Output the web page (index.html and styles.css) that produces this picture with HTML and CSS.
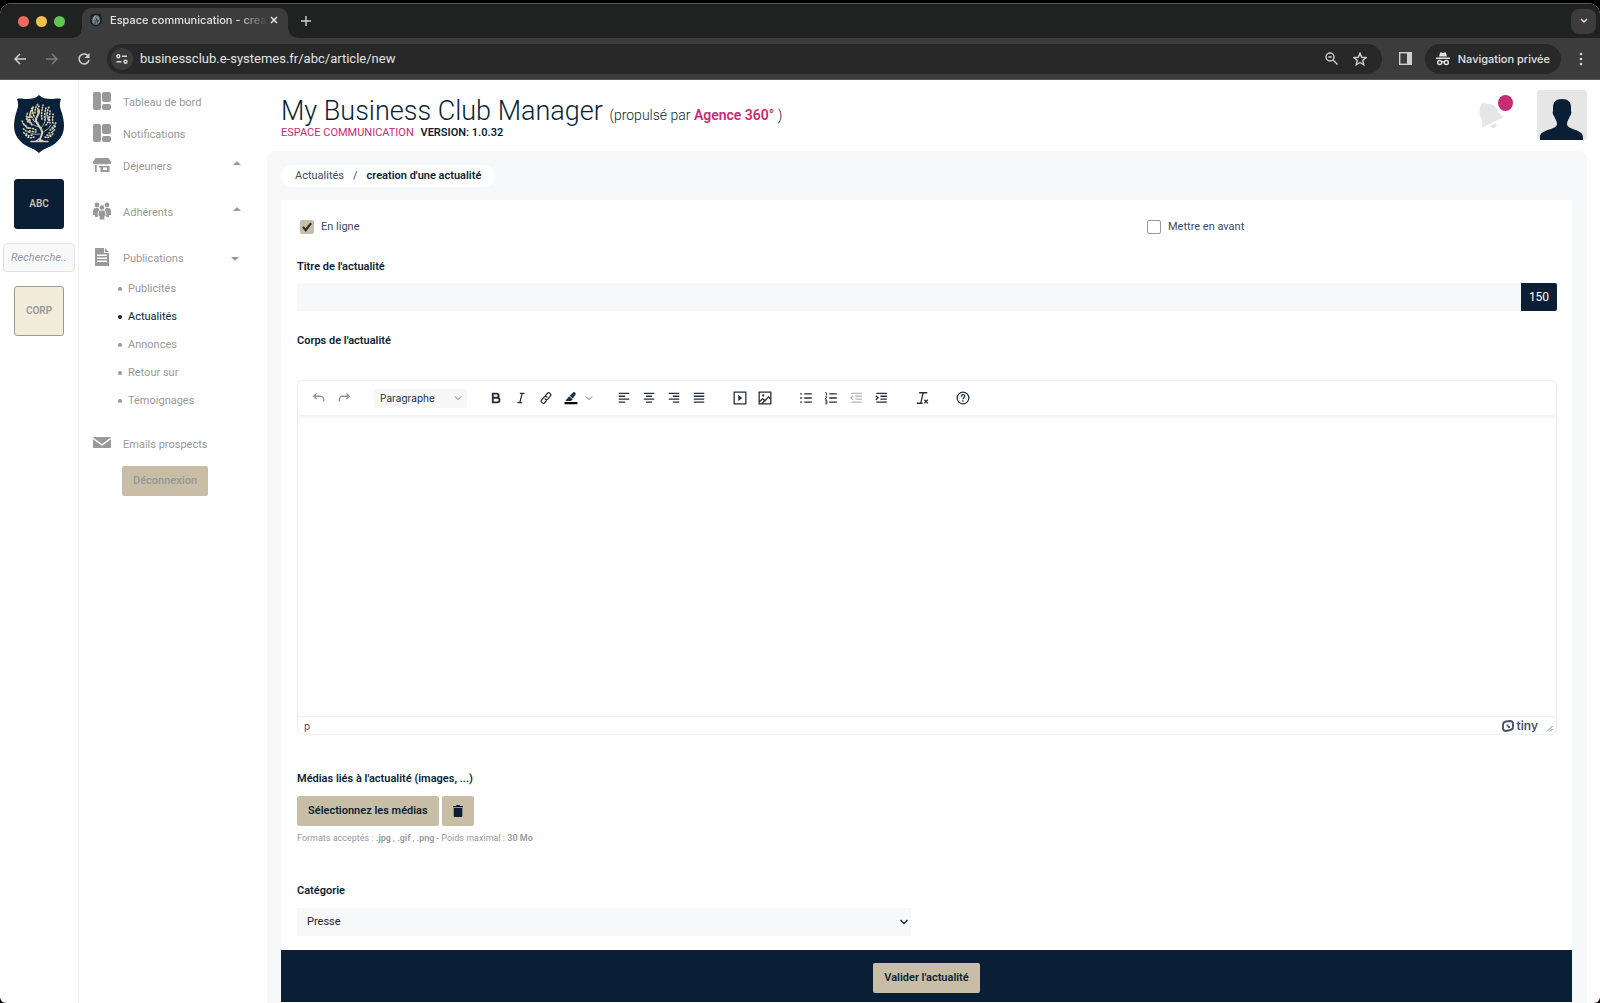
FILE: index.html
```html
<!DOCTYPE html>
<html lang="fr">
<head>
<meta charset="utf-8">
<title>Espace communication - creation d'une actualité</title>
<link rel="stylesheet" href="styles.css">
</head>
<body>
<svg class="defs" aria-hidden="true">
  <symbol id="crest" viewBox="0 0 50 58">
    <path fill="#0a2239" d="M25 0c3 3 7 4 12 4 4 0 7-1 10 0-2 5-1 9 1 14 1 4 2 8 2 13 0 9-5 15-11 19-5 3-10 4-14 8-4-4-9-5-14-8C5 46 0 40 0 31c0-5 1-9 2-13 2-5 3-9 1-14 3-1 6 0 10 0 5 0 9-1 12-4z"/>
    <g fill="none" stroke="#d8cdb0" stroke-linecap="round">
      <path stroke-width="2" d="M26 46c-1-4 3-5 2-9 0-5-6-7-6-12 0-4 4-6 3-10"/>
      <path stroke-width="1.500" d="M17 46.500h17M22 46l3-2 4 2"/>
      <path stroke-width=".8" d="M28 38c4-3 7-4 9-8M26 32c-6-1-9-3-11-7M22 24c-3-3-4-7-3-12M27 33c4-4 5-9 5-15M26 39c-5 1-9 0-12-3"/>
      <path stroke-width="1.600" stroke-dasharray=".8 2" d="M15 37c-3-1-5-2-6-4M13 39c-2 0-3-1-4-2M12 31c-3-2-4-4-4-7M15 33c-3-1-5-3-6-5M14 27c-2-3-2-6 0-10M17 28c-2-4-2-8 0-12M20 21c-2-4-2-6-1-9M17 22c-1-4 0-6 1-9M24 17c-1-3 0-5 2-7M21 18c0-4 1-7 3-9M28 24c-1-5 0-9 1-14M31 25c-1-4 0-9 1-12M34 24c-1-5-1-9 1-12M36 28c-1-4 0-9 0-12M39 28c-1-3 0-6 0-9M38 33c2-2 4-4 4-7M36 35c3-1 5-3 6-5M35 38c3 0 5-2 6-4M33 40c3 1 5 0 7-2M18 30c-3-3-4-5-4-8M18 40c-3 1-5 1-7 0M20 42c-2 1-4 1-6 0M32 30c2-2 3-5 3-8M22 35c-3-2-7-2-10-2M22 37c-3 0-6-1-8-2M31 42c3 1 4 0 6-1M24 28c-3-1-5-3-6-6"/>
    </g>
  </symbol>
  <symbol id="dash" viewBox="0 0 18 18"><rect x="0" y="0" width="8" height="18" rx="2"/><rect x="9" y="0" width="9" height="10" rx="2"/><rect x="9" y="12" width="9" height="6" rx="2"/></symbol>
</svg>

<div class="window">
  <header class="tabs">
    <span class="dot red"></span><span class="dot yellow"></span><span class="dot green"></span>
    <div class="tab">
      <svg class="favicon" width="12" height="14"><use href="#crest"/></svg>
      <span class="tab-title">Espace communication - crea</span>
      <button class="chrome-btn" aria-label="Fermer l'onglet"><svg width="8" height="8" viewBox="0 0 8 8"><path d="M1 1l6 6M7 1L1 7" stroke="#e3e3e3" stroke-width="1.5"/></svg></button>
    </div>
    <button class="chrome-btn new-tab" aria-label="Nouvel onglet"><svg width="10" height="10" viewBox="0 0 10 10"><path d="M5 0v10M0 5h10" stroke="#d0d0d0" stroke-width="1.4"/></svg></button>
    <button class="chrome-btn tab-list" aria-label="Rechercher dans les onglets"><svg width="8" height="6" viewBox="0 0 8 6"><path d="M1 1l3 3 3-3" fill="none" stroke="#e3e3e3" stroke-width="1.5"/></svg></button>
  </header>
  <div class="toolbar">
    <button class="chrome-btn" aria-label="Retour"><svg width="12" height="12" viewBox="0 0 12 12"><path d="M12 6H1.500M6 1L1 6l5 5" fill="none" stroke="#d0d0d0" stroke-width="1.5"/></svg></button>
    <button class="chrome-btn" aria-label="Avancer"><svg width="12" height="12" viewBox="0 0 12 12"><path d="M0 6h10.500M6 1l5 5-5 5" fill="none" stroke="#7c7c7c" stroke-width="1.5"/></svg></button>
    <button class="chrome-btn" aria-label="Recharger"><svg width="12" height="12" viewBox="0 0 12 12"><path d="M10.500 3.500A5 5 0 1 0 11 7" fill="none" stroke="#d0d0d0" stroke-width="1.500"/><path d="M11.500 0v5h-5z" fill="#d0d0d0"/></svg></button>
    <div class="address">
      <span class="site-info"><svg width="12" height="10" viewBox="0 0 12 10"><g fill="none" stroke="#d8d8d8" stroke-width="1.400"><circle cx="2.300" cy="2.300" r="1.500"/><path d="M6 2.300h5M0.500 7.700h5"/><circle cx="9.500" cy="7.700" r="1.500"/></g></svg></span>
      <input class="url" aria-label="Adresse" value="businessclub.e-systemes.fr/abc/article/new">
      <svg width="13" height="13" viewBox="0 0 13 13" fill="none" stroke="#cfcfcf" stroke-width="1.400"><circle cx="5" cy="5" r="4"/><path d="M8 8l4.500 4.500M3.300 5h3.400"/></svg>
      <svg width="14" height="14" viewBox="0 0 24 24" fill="none" stroke="#cfcfcf" stroke-width="2.300"><path d="M12 2l2.900 7 7.600.600-5.800 4.900 1.800 7.400L12 18l-6.500 3.900 1.800-7.400L1.500 9.600 9.100 9z"/></svg>
    </div>
    <svg width="13" height="13" viewBox="0 0 13 13"><rect x=".7" y=".7" width="11.600" height="11.600" fill="none" stroke="#cfcfcf" stroke-width="1.400"/><path d="M8 0h5v13H8z" fill="#cfcfcf"/></svg>
    <span class="private"><svg width="14" height="14" viewBox="0 0 14 14"><path fill="#e3e3e3" d="M3 4.500L4 1c.2-.8 1-.9 1.500-.6L7 1l1.500-.6c.6-.3 1.300-.2 1.500.6l1 3.500zM0 5.500h14V7H0z"/><g fill="none" stroke="#e3e3e3" stroke-width="1.400"><circle cx="3.700" cy="10.500" r="2"/><circle cx="10.300" cy="10.500" r="2"/><path d="M5.700 10.200q1.300-.8 2.600 0"/></g></svg>Navigation privée</span>
    <button class="chrome-btn" aria-label="Menu"><svg width="4" height="14" viewBox="0 0 4 14" fill="#d0d0d0"><circle cx="2" cy="2" r="1.300"/><circle cx="2" cy="7" r="1.300"/><circle cx="2" cy="12" r="1.300"/></svg></button>
  </div>

  <div class="page">
    <aside class="rail">
      <svg width="50" height="58"><use href="#crest"/></svg>
      <button class="club active">ABC</button>
      <input class="search" placeholder="Recherche.." aria-label="Recherche">
      <button class="club">CORP</button>
    </aside>

    <nav class="side">
      <a class="item" href="#"><svg class="ico" width="18" height="18"><use href="#dash"/></svg>Tableau de bord</a>
      <a class="item" href="#"><svg class="ico" width="18" height="18"><use href="#dash"/></svg>Notifications</a>
      <a class="item group" href="#"><svg class="ico" width="18" height="18" viewBox="0 0 18 18"><path d="M2.500 2h13L18 6v1c0 1.300-2 1.700-3 .5-1 1.300-3 1.300-4 0-1 1.300-3 1.300-4 0-1 1.300-3 1.300-4 0C2 8.700 0 8.300 0 7V6z"/><path fill-rule="evenodd" d="M2 9h1.700v7H2zM6 10h10.500v6H7.500v-4.500H6zm4 1.500v2.500h4v-2.500z"/></svg>Déjeuners<span class="caret up"></span></a>
      <a class="item group" href="#"><svg class="ico" width="18" height="18" viewBox="0 0 18 18"><circle cx="4" cy="3" r="2.400"/><circle cx="14" cy="3" r="2.400"/><circle cx="9" cy="5.500" r="2.300"/><path d="M0 13V9c0-2 1-3 3-3h2.500c0 1 .5 2 1 2.500C5 9 4.800 10 4.800 11v4H2v-2zM18 13V9c0-2-1-3-3-3h-2.500c0 1-.5 2-1 2.500 1.500.5 1.700 1.500 1.700 2.500v4H16v-2zM5.600 14v-3c0-1.600 1-2.400 2.400-2.400h2c1.400 0 2.400.8 2.400 2.400v3h-1v3.500H6.600V14z"/></svg>Adhérents<span class="caret up"></span></a>
      <a class="item" href="#"><svg class="ico" width="18" height="18" viewBox="0 0 18 18"><path fill-rule="evenodd" d="M2 0h9v5h5v13H2zM4 6.500V8h10V6.500zM4 9.500V11h10V9.500zM4 12.500V14h10v-1.500zM12 0l4 4h-4z"/></svg>Publications<span class="caret down"></span></a>
      <ul class="sub">
        <li><a href="#">Publicités</a></li>
        <li class="current"><a href="#">Actualités</a></li>
        <li><a href="#">Annonces</a></li>
        <li><a href="#">Retour sur</a></li>
        <li><a href="#">Témoignages</a></li>
      </ul>
      <a class="item" href="#"><svg class="ico" width="18" height="18" viewBox="0 0 18 18"><path d="M0 3.500Q0 3 1 3h16q1 0 1 .5L9 10zM0 5.300l9 6.400 9-6.400V13q0 1-1 1H1q-1 0-1-1z"/></svg>Emails prospects</a>
      <button class="btn logout">Déconnexion</button>
    </nav>

    <main class="main">
      <div class="top">
        <div>
          <h1>My Business Club Manager <small>(propulsé par <b>Agence 360°</b> )</small></h1>
          <p class="space"><span>ESPACE COMMUNICATION</span> <b>VERSION: 1.0.32</b></p>
        </div>
        <div class="user">
          <button class="bell" aria-label="Notifications"><svg width="26" height="28" viewBox="0 0 26 28" fill="#e6e6e6"><path d="M2 4c1-3 4-3 5-1 6-1 10 2 12 7 1 3 3 4 5 5 .6 1 0 2-1 2L4 26c-1 0-2-.5-1-2 1-3 0-5-1-7-2-5-2-9 0-13z"/><path d="M11 25l6-3c2 3-1 5-3 5-1 0-2-1-3-2z"/></svg><span class="badge"></span></button>
          <svg class="avatar" width="50" height="50" viewBox="0 0 50 50"><rect width="50" height="50" rx="3" fill="#e6e6e6"/><path fill="#0a1f35" d="M25 9c6 0 9 3 9 8v4c1 1 0 4-1 5-1 3-3 5-3 8 0 6 16 5 16 13v3H3v-3c0-8 17-7 17-13 0-3-2-5-3-8-1-1-2-4-1-5v-4c0-5 3-8 9-8z"/></svg>
        </div>
      </div>

      <div class="panel">
        <div class="crumbs"><a href="#">Actualités</a><span>/</span><b>creation d'une actualité</b></div>
        <form class="card">
          <div class="checks">
            <label><input type="checkbox" checked>En ligne</label>
            <label><input type="checkbox">Mettre en avant</label>
          </div>
          <label class="lbl" for="titre">Titre de l'actualité</label>
          <div class="title-row"><input id="titre" type="text"><span class="count">150</span></div>
          <label class="lbl" for="corps">Corps de l'actualité</label>
          <div class="editor">
            <div class="tools">
              <div class="grp">
                <button type="button" aria-label="Annuler"><svg class="dim" viewBox="0 0 24 24"><path d="M8 4L3 9l5 5M3 9h11c5 0 7 4 6 9"/></svg></button>
                <button type="button" aria-label="Rétablir"><svg class="dim" viewBox="0 0 24 24"><path d="M16 4l5 5-5 5M21 9H10c-5 0-7 4-6 9"/></svg></button>
              </div>
              <button type="button" class="block">Paragraphe<svg class="chev" viewBox="0 0 10 6"><path d="M1 1l4 4 4-4"/></svg></button>
              <div class="grp">
                <button type="button" aria-label="Gras"><svg viewBox="0 0 24 24"><path stroke-width="3.200" d="M6.500 4.500H13a3.500 3.500 0 0 1 0 7H6.500zM6.500 11.500H14a4 4 0 0 1 0 8H6.500z"/></svg></button>
                <button type="button" aria-label="Italique"><svg viewBox="0 0 24 24"><path d="M10 4h8M6 20h8M14 4l-4 16"/></svg></button>
                <button type="button" aria-label="Lien"><svg viewBox="0 0 24 24"><path d="M11 8l4-4.500c2-2 7 2 5 4.500l-5 6c-1.500 1.500-4 1-5-1M13 16l-4 4.500c-2 2-7-2-5-4.500l5-6c1.500-1.500 4-1 5 1"/></svg></button>
                <button type="button" aria-label="Surlignage"><svg viewBox="0 0 24 24"><path class="solid" d="M3 16l6-7 6 5-3 3H3zM10 8l6-6c2-1 5 2 4 4l-5 7z"/><path class="ink" d="M1 19h22v3.500H1z"/></svg></button>
                <button type="button" class="narrow" aria-label="Couleurs"><svg class="chev" viewBox="0 0 10 6"><path d="M1 1l4 4 4-4"/></svg></button>
              </div>
              <div class="grp">
                <button type="button" aria-label="Aligner à gauche"><svg viewBox="0 0 24 24"><path d="M3 4h18M3 9h11M3 14h18M3 19h11"/></svg></button>
                <button type="button" aria-label="Centrer"><svg viewBox="0 0 24 24"><path d="M3 4h18M7 9h10M3 14h18M7 19h10"/></svg></button>
                <button type="button" aria-label="Aligner à droite"><svg viewBox="0 0 24 24"><path d="M3 4h18M10 9h11M3 14h18M10 19h11"/></svg></button>
                <button type="button" aria-label="Justifier"><svg viewBox="0 0 24 24"><path d="M3 4h18M3 9h18M3 14h18M3 19h18"/></svg></button>
              </div>
              <div class="grp">
                <button type="button" aria-label="Média"><svg viewBox="0 0 24 24"><path d="M2 2h20v20H2z"/><path class="solid" d="M9 7l7 5-7 5z"/></svg></button>
                <button type="button" aria-label="Image"><svg viewBox="0 0 24 24"><path d="M2 2h20v20H2zM3 18l5-5 4 4 6-7 4 4M6 22l7-7"/><circle class="solid" cx="9" cy="7.500" r="2"/></svg></button>
              </div>
              <div class="grp">
                <button type="button" aria-label="Liste à puces"><svg viewBox="0 0 24 24"><path d="M9 5h13M9 12h13M9 19h13M2 5h3M2 12h3M2 19h3"/></svg></button>
                <button type="button" aria-label="Liste numérotée"><svg viewBox="0 0 24 24"><path d="M9 5h13M9 12h13M9 19h13"/><path stroke-width="1.500" d="M2 3h2v5M2 10h3l-3 4h3M2 16h3v6H2M2 19h3"/></svg></button>
                <button type="button" aria-label="Diminuer le retrait"><svg class="faint" viewBox="0 0 24 24"><path d="M4 4h18M11 9h11M11 14h11M4 19h18M7 8l-4 3.500L7 15"/></svg></button>
                <button type="button" aria-label="Augmenter le retrait"><svg viewBox="0 0 24 24"><path d="M4 4h18M11 9h11M11 14h11M4 19h18M3 8l4 3.500L3 15"/></svg></button>
              </div>
              <div class="grp"><button type="button" aria-label="Effacer la mise en forme"><svg viewBox="0 0 24 24"><path d="M7 3h14M14 3l-4 17M3 21h10M16 15l6 6M22 15l-6 6"/></svg></button></div>
              <div class="grp"><button type="button" aria-label="Aide"><svg viewBox="0 0 24 24"><circle cx="12" cy="12" r="10"/><path d="M9 10c0-5 6-5 6-1 0 2-3 2.500-3 5M12 16v2.500"/></svg></button></div>
            </div>
            <textarea id="corps"></textarea>
            <div class="status"><span>p</span><span class="tiny"><svg width="12" height="12" viewBox="0 0 12 12"><path d="M4 1.500l4-.5q3 0 3 3v3q0 2.500-3 3L4 11q-3 0-3-3V5q0-3 3-3.500z" fill="none" stroke="#4a5466" stroke-width="1.900"/><path d="M4.500 4.500h2v1.500h1.500V8h-2V6.500H4.500z" fill="#4a5466"/></svg>tiny</span><svg width="7" height="7" viewBox="0 0 7 7"><path d="M1 6.500L6.500 1M4 6.500L6.500 4" stroke="#7a8290"/></svg></div>
          </div>

          <label class="lbl" for="medias">Médias liés à l'actualité (images, ...)</label>
          <div class="media"><button type="button" class="btn" id="medias">Sélectionnez les médias</button><button type="button" class="btn trash" aria-label="Supprimer les médias"><svg width="10" height="12" viewBox="0 0 10 12"><path fill="#0a1f35" d="M3 1l.5-1h3L7 1h3v1.200H0V1zM.7 3h8.600v8q0 1-1 1H1.700q-1 0-1-1z"/></svg></button></div>
          <p class="hint">Formats acceptés : <b>.jpg</b> , <b>.gif</b> , <b>.png</b> - Poids maximal : <b>30 Mo</b></p>
          <label class="lbl" for="cat">Catégorie</label>
          <div class="select"><select id="cat"><option>Presse</option></select><svg class="arrow" width="8" height="6" viewBox="0 0 8 6"><path d="M.5 1L4 4.500 7.500 1" fill="none" stroke="#222" stroke-width="1.300"/></svg></div>
          <div class="submit"><button type="submit" class="btn">Valider l'actualité</button></div>
        </form>
      </div>
    </main>
  </div>
</div>
</body>
</html>
```

FILE: styles.css
```css
* { box-sizing: border-box; }
body { margin: 0; padding-top: 3px; background: #000; font: 11px/16px Roboto, sans-serif; color: #0a1f35; }
button, input, select, textarea { font: inherit; color: inherit; margin: 0; padding: 0; border: 0; background: none; }
a { color: inherit; text-decoration: none; }
b { font-weight: 600; }
svg { display: block; flex: none; }
.defs { position: absolute; width: 0; height: 0; }

/* Browser window */
.window { display: flex; flex-direction: column; min-height: calc(100vh - 3px); border-radius: 12px 12px 6px 6px; overflow: hidden; background: #fff; }
.tabs { display: flex; align-items: center; height: 35px; padding: 0 4px 0 18px; background: #202221; border-top: 1px solid #555; }
.dot { width: 11px; height: 11px; margin-right: 7px; border-radius: 50%; }
.red { background: #ed6a5e; }
.yellow { background: #f4bf4f; }
.green { background: #61c554; }
.chrome-btn { display: grid; place-items: center; flex: none; }
.tab { display: flex; align-items: center; align-self: flex-end; width: 206px; height: 30px; margin-left: 10px; padding: 0 10px 6px 8px; border-radius: 9px 9px 0 0; background: #3c3c3c; position: relative; }
.tab::before, .tab::after { content: ""; position: absolute; bottom: 0; width: 9px; height: 9px; }
.tab::before { right: 100%; background: radial-gradient(circle at 0 0, transparent 8px, #3c3c3c 9px); }
.tab::after { left: 100%; background: radial-gradient(circle at 100% 0, transparent 8px, #3c3c3c 9px); }
.tab-title { flex: 1; margin: 0 2px 0 8px; overflow: hidden; white-space: nowrap; font: 500 11px/16px Inter, sans-serif; color: #e3e3e3; -webkit-mask-image: linear-gradient(90deg, #000 80%, transparent); mask-image: linear-gradient(90deg, #000 80%, transparent); }
.new-tab { margin-left: 13px; }
.tab-list { width: 25px; height: 25px; margin-left: auto; border-radius: 8px; background: #3c3c3c; }
.toolbar { display: flex; align-items: center; height: 42px; padding: 0 17px 0 14px; background: #3c3c3c; border-bottom: 1px solid #5a5a5a; }
.toolbar > .chrome-btn { margin-right: 20px; }
.toolbar > .chrome-btn:last-child { margin: 0; }
.address { display: flex; flex: 1; align-items: center; gap: 15px; height: 30px; margin: 0 17px 0 -3px; padding: 0 15px 0 4px; border-radius: 15px; background: #282828; }
.site-info { display: grid; place-items: center; width: 22px; height: 22px; border-radius: 50%; background: #3c3c3c; }
.url { flex: 1; margin-left: -8px; font: 13px/16px Roboto, sans-serif; color: #e3e3e3; }
.private { display: flex; align-items: center; gap: 8px; height: 30px; margin: 0 18px 0 13px; padding: 0 11px; border-radius: 15px; background: #282828; font: 500 11px/16px Inter, sans-serif; color: #e3e3e3; }

/* Application */
.page { display: flex; flex: 1; }
.rail { display: flex; flex-direction: column; align-items: center; width: 79px; padding-top: 15px; border-right: 1px solid #f0f0f0; }
.club { width: 50px; height: 50px; border: 1px solid #999; border-radius: 3px; background: #f2ecda; color: #999; font-size: 10px; font-weight: 600; }
.club.active { margin-top: 26px; border-color: #0a1f35; background: #0a1f35; color: #c8bea6; }
.search { width: 72px; height: 29px; margin: 14px 0; padding: 0 7px; border: 1px solid #e6e4d8; border-radius: 4px; background: #f6f8fa; font-style: italic; }
.search::placeholder { color: #999; opacity: 1; }

.side { width: 188px; padding: 7px 26px 0 14px; color: #999; }
.item { display: flex; align-items: center; height: 32px; }
.item.group { margin-bottom: 14px; }
.ico { margin: 0 12px 4px 0; fill: #999; }
.caret { margin-left: auto; border: 4px solid transparent; }
.up { border-top: 0; border-bottom-color: #999; margin-bottom: 8px; }
.down { border-bottom: 0; border-top-color: #999; margin-right: 2px; }
.sub { margin: 0 0 14px; padding: 0; list-style: none; }
.sub li { display: flex; align-items: center; height: 28px; padding-left: 25px; }
.sub li::before { content: ""; width: 4px; height: 4px; margin-right: 6px; border-radius: 50%; background: currentColor; }
.sub .current { color: #0a1f35; }
.btn { height: 30px; padding: 0 11px; border-radius: 2px; background: #c8bea6; font-weight: 600; }
.logout { margin: 5px 0 0 29px; color: #999; }

.main { display: flex; flex: 1; flex-direction: column; min-width: 0; padding-right: 13px; }
.top { display: flex; justify-content: space-between; height: 71px; padding: 10px 0 0 14px; }
h1 { margin: 7px 0 0; font-size: 27px; line-height: 28px; font-weight: 300; }
h1 small { font-size: 14px; line-height: 14px; }
h1 b, .space span { color: #c42c73; }
.space { margin: 0; }
.space span { margin-right: 4px; }
.user { display: flex; gap: 24px; }
.bell { position: relative; align-self: flex-start; margin: 11px 8px 0 0; }
.badge { position: absolute; left: 19px; top: -6px; width: 15px; height: 16px; border-radius: 50%; background: #c42c73; }

.panel { flex: 1; padding: 14px 15px 0 14px; border-radius: 8px 8px 0 0; background: #f6f8fa; }
.crumbs { display: flex; width: fit-content; gap: 9px; height: 22px; padding: 0 14px; border-radius: 11px; background: #fff; line-height: 22px; }
.crumbs a, .crumbs span { color: #3b4c5e; }
.card { margin-top: 13px; padding: 19px 15px 0 16px; background: #fff; }
.checks { display: grid; grid-template-columns: 847px 1fr; padding-left: 3px; color: #3b4c5e; }
.checks label { display: flex; align-items: center; gap: 7px; }
.checks input { appearance: none; display: grid; place-items: center; width: 14px; height: 14px; border: 1px solid #999; border-radius: 2px; }
.checks input:checked { border-color: #c8bea6; background: #c8bea6; }
.checks input:checked::before { content: ""; width: 10px; height: 10px; background: #333; clip-path: polygon(0 55%, 18% 42%, 36% 62%, 82% 4%, 100% 18%, 38% 100%); }
.lbl { display: block; font-weight: 600; }
.checks + .lbl { margin-top: 24px; }
.title-row { display: flex; height: 28px; margin: 8px 0 22px; }
.title-row input { flex: 1; padding: 0 10px; background: #f6f8fa; }
.count { width: 36px; border-radius: 0 2px 2px 0; background: #0a1f35; color: #fff; font-size: 12px; line-height: 29px; text-align: center; }

.editor { display: flex; flex-direction: column; height: 355px; margin: 31px 0 36px; border: 1px solid #eee; border-radius: 6px; overflow: hidden; }
.tools { display: flex; align-items: center; gap: 16px; height: 34px; padding: 0 8px; box-shadow: 0 2px 4px #00000012; }
.grp { display: flex; }
.tools .grp button { display: grid; place-items: center; width: 25px; height: 24px; }
.tools .grp .narrow { width: 12px; }
.tools svg { width: 14px; height: 14px; fill: none; stroke: #222f3e; stroke-width: 2.2px; }
.tools .chev { width: 8px; height: 6px; stroke: #777; stroke-width: 1.2px; }
.tools .dim { stroke: #8b919a; }
.tools .faint { stroke: #b4b8bd; }
.tools .solid { fill: #222f3e; stroke: none; }
.tools .ink { fill: #000; stroke: none; }
.tools .block { display: flex; align-items: center; justify-content: space-between; width: 93px; height: 19px; margin-left: 2px; padding: 0 5px 0 6px; border-radius: 2px; background: #f7f7f7; color: #222f3e; font: 10px/16px Inter, sans-serif; }
textarea { flex: 1; padding: 12px; resize: none; }
.status { display: flex; align-items: center; gap: 8px; height: 18px; padding: 0 3px 0 6px; border-top: 1px solid #eee; font: 10px/16px Inter, sans-serif; color: #4a5466; }
.status > svg { align-self: flex-end; margin: 0 0 2px; }
.tiny { display: flex; align-items: center; gap: 2px; margin-left: auto; font-size: 12px; font-weight: 600; }
.media { display: flex; gap: 3px; margin: 9px 0 4px; }
.hint { margin: 0 0 37px; color: #999; font-size: 9px; }
.select { position: relative; width: calc(50% - 16px); margin: 9px 0 14px; }
select { appearance: none; width: 100%; height: 28px; padding: 0 10px; border-radius: 2px; background: #f6f8fa; color: #222; }
.arrow { position: absolute; right: 3px; top: 11px; pointer-events: none; }
.submit { position: sticky; bottom: 0; display: flex; justify-content: center; margin: 0 -15px 0 -16px; padding: 13px 0 9px; background: #0a1f35; }
```
